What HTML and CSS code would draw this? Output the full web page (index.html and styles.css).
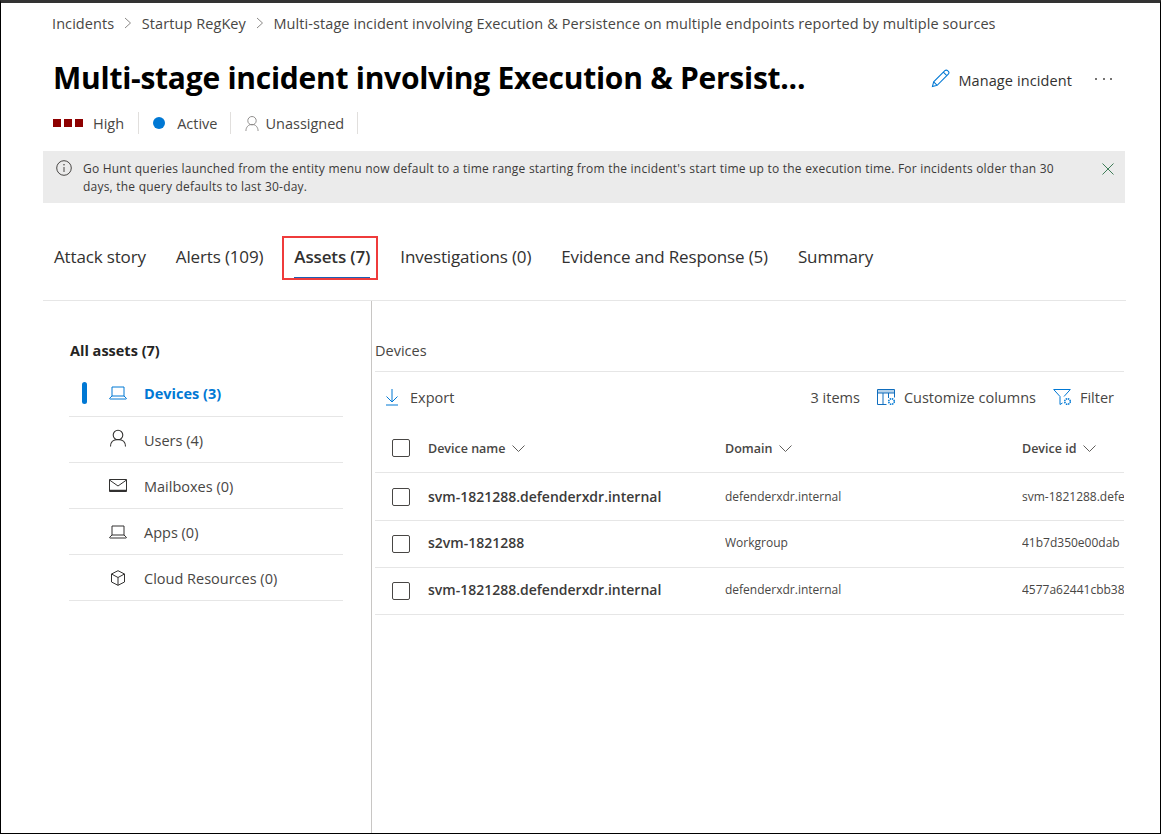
FILE: index.html
```html
<!DOCTYPE html>
<html>
<head>
  <meta charset="utf-8">
  <title>Incident assets</title>
  <link rel="stylesheet" href="styles.css">
</head>
<body>
<div class="frame">

  <!-- breadcrumb -->
  <div class="crumbs">
    <span>Incidents</span>
    <svg class="crumb-sep" width="8" height="12" viewBox="0 0 8 12"><path d="M1 1l5.500 5L1 11" fill="none" stroke="#8a8886"/></svg>
    <span>Startup RegKey</span>
    <svg class="crumb-sep" width="8" height="12" viewBox="0 0 8 12"><path d="M1 1l5.500 5L1 11" fill="none" stroke="#8a8886"/></svg>
    <span>Multi-stage incident involving Execution &amp; Persistence on multiple endpoints reported by multiple sources</span>
  </div>

  <!-- title row -->
  <div class="title-row">
    <h1>Multi-stage incident involving Execution &amp; Persist...</h1>
    <div class="title-actions">
      <svg width="19" height="19" viewBox="0 0 20 20"><path d="M1.500 18.500l1.300-5L14.600 1.800c.8-.8 2.100-.8 2.900 0l.7.700c.8.800.8 2.100 0 2.900L6.500 17.200zM2.800 13.500l3.700 3.700M13 3.400l3.600 3.600" fill="none" stroke="#0078d4" stroke-width="1.100"/></svg>
      <span class="manage">Manage incident</span>
      <span class="dots"><i></i><i></i><i></i></span>
    </div>
  </div>

  <!-- status row -->
  <div class="status-row">
    <div class="status-item status-sev">
      <span class="sev"><i></i><i></i><i></i></span>
      <span>High</span>
    </div>
    <div class="status-item">
      <span class="active-dot"></span>
      <span>Active</span>
    </div>
    <div class="status-item status-user">
      <svg width="14" height="17" viewBox="0 0 15 17"><circle cx="7.500" cy="5.500" r="4.500" fill="none" stroke="#8a8886"/><path d="M1 16.500c0-4 2.500-7 6.500-7s6.500 3 6.500 7" fill="none" stroke="#8a8886"/></svg>
      <span>Unassigned</span>
    </div>
  </div>

  <!-- notice -->
  <div class="notice">
    <svg class="notice-icon" width="16" height="16" viewBox="0 0 16 16"><circle cx="8" cy="8" r="7.300" fill="none" stroke="#484644"/><path d="M8 7v5" stroke="#484644"/><circle cx="8" cy="4.800" r=".8" fill="#484644"/></svg>
    <p>Go Hunt queries launched from the entity menu now default to a time range starting from the incident's start time up to the execution time. For incidents older than 30 days, the query defaults to last 30-day.</p>
    <svg class="notice-close" width="12" height="12" viewBox="0 0 12 12"><path d="M.5.500l11 11M11.500.500l-11 11" stroke="#3f7d58"/></svg>
  </div>

  <!-- tabs -->
  <div class="tabs">
    <span class="tab">Attack story</span>
    <span class="tab">Alerts (109)</span>
    <span class="tab tab-on">Assets (7)</span>
    <span class="tab">Investigations (0)</span>
    <span class="tab">Evidence and Response (5)</span>
    <span class="tab">Summary</span>
  </div>

  <div class="content">

    <!-- left nav -->
    <div class="side">
      <div class="side-title">All assets (7)</div>
      <div class="side-item side-on">
        <svg width="18" height="14" viewBox="0 0 18 14"><path d="M3 1h12v9H3zM3 10L.6 12.300c-.2.300 0 .7.400.7h16c.4 0 .6-.4.400-.7L15 10" fill="none" stroke="#0078d4"/></svg>
        <span>Devices (3)</span>
      </div>
      <div class="side-item">
        <svg class="icon-user" width="18" height="18" viewBox="0 0 18 18"><circle cx="9" cy="6" r="4.800" fill="none" stroke="#323130" stroke-width="1.100"/><path d="M1.500 17.500c0-4.500 3-7 7.500-7s7.500 2.500 7.500 7" fill="none" stroke="#323130" stroke-width="1.100"/></svg>
        <span>Users (4)</span>
      </div>
      <div class="side-item">
        <svg width="18" height="13" viewBox="0 0 18 13"><path d="M.5.500h17v12H.5z" fill="none" stroke="#323130"/><path d="M.5 1L9 7l8.500-6" fill="none" stroke="#323130"/><path d="M.5 11.500h17" stroke="#323130" stroke-width="1.500"/></svg>
        <span>Mailboxes (0)</span>
      </div>
      <div class="side-item">
        <svg width="18" height="14" viewBox="0 0 18 14"><path d="M3 1h12v9H3zM3 10L.6 12.300c-.2.300 0 .7.400.7h16c.4 0 .6-.4.400-.7L15 10" fill="none" stroke="#323130"/></svg>
        <span>Apps (0)</span>
      </div>
      <div class="side-item">
        <svg width="18" height="16" viewBox="0 0 18 16"><path d="M9 .700l6.500 3.300v8L9 15.300 2.500 12V4zM2.500 4L9 7.500 15.500 4M9 7.500v7.800" fill="none" stroke="#323130"/></svg>
        <span>Cloud Resources (0)</span>
      </div>
    </div>

    <!-- devices table -->
    <div class="main">
      <div class="main-title">Devices</div>
      <div class="toolbar">
        <div class="tool tool-export">
          <svg width="14" height="18" viewBox="0 0 14 18"><path d="M7 1v12.500M1.500 8.500L7 14l5.500-5.500M1 17h12" fill="none" stroke="#0078d4"/></svg>
          <span>Export</span>
        </div>
        <div class="tool-right">
          <span>3 items</span>
          <div class="tool">
            <svg width="19" height="17" viewBox="0 0 19 17"><path d="M.5 15.500V.5h17v8M.5 15.500h9M.5 4h17M6 4v11.500M11.500 4v5" fill="none" stroke="#106ebe"/><path d="M.5.500h17V4H.5z" fill="#106ebe" opacity=".3"/><circle cx="14.500" cy="12.500" r="2.800" fill="none" stroke="#0078d4" stroke-width="1.500" stroke-dasharray="1.500 .7"/></svg>
            <span>Customize columns</span>
          </div>
          <div class="tool">
            <svg width="19" height="17" viewBox="0 0 19 17"><path d="M.700.500h16.600L11 7.500M.700.500L7 7.500v8l2.500-1.500" fill="none" stroke="#0078d4"/><circle cx="14.500" cy="12.500" r="2.800" fill="none" stroke="#0078d4" stroke-width="1.500" stroke-dasharray="1.500 .7"/></svg>
            <span>Filter</span>
          </div>
        </div>
      </div>
      <div class="grid-wrap">
        <table class="grid">
          <colgroup><col class="c-check"><col class="c-name"><col class="c-domain"><col class="c-id"></colgroup>
          <tr class="head">
            <th><span class="check"></span></th>
            <th>Device name <svg class="sort" width="13" height="7" viewBox="0 0 13 7"><path d="M.5.500l6 6 6-6" fill="none" stroke="#605e5c"/></svg></th>
            <th>Domain <svg class="sort" width="13" height="7" viewBox="0 0 13 7"><path d="M.5.500l6 6 6-6" fill="none" stroke="#605e5c"/></svg></th>
            <th>Device id <svg class="sort" width="13" height="7" viewBox="0 0 13 7"><path d="M.5.500l6 6 6-6" fill="none" stroke="#605e5c"/></svg></th>
          </tr>
          <tr class="row-a">
            <td><span class="check"></span></td>
            <td class="dev">svm-1821288.defenderxdr.internal</td>
            <td>defenderxdr.internal</td>
            <td>svm-1821288.defe</td>
          </tr>
          <tr>
            <td><span class="check"></span></td>
            <td class="dev">s2vm-1821288</td>
            <td>Workgroup</td>
            <td>41b7d350e00dab</td>
          </tr>
          <tr>
            <td><span class="check"></span></td>
            <td class="dev">svm-1821288.defenderxdr.internal</td>
            <td>defenderxdr.internal</td>
            <td>4577a62441cbb38</td>
          </tr>
        </table>
      </div>
    </div>
  </div>

  <!-- red box drawn on top of the Assets tab -->
  <div class="callout"></div>
</div>
</body>
</html>
```

FILE: styles.css
```css
html, body {margin: 0; padding: 0;}
body {background: #fff; font-family: "Open Sans", "Noto Sans", sans-serif; color: #323130;}
.frame {position: relative; width: 1161px; height: 834px; box-sizing: border-box; border: 1px solid #000; border-top: 3px solid #333; padding-left: 42px; overflow: hidden; display: flex; flex-direction: column;}

.crumbs {display: flex; align-items: center; height: 24px; margin-top: 8px; padding-left: 9px; font-size: 14.5px; letter-spacing: .08px; color: #484644; white-space: nowrap;}
.crumb-sep {margin: 0 9.5px 0 10px;}

.title-row {display: flex; align-items: center; justify-content: space-between; height: 44px; margin-top: 20px; padding-left: 10px; padding-right: 48px;}
h1 {margin: 0; font-size: 30px; font-weight: 700; letter-spacing: -.26px; color: #000; white-space: nowrap;}
.title-actions {display: flex; align-items: center; padding-top: 2px; font-size: 14.5px; letter-spacing: .1px; color: #323130;}
.manage {margin-left: 8px; padding-top: 5px;}
.dots {display: flex; gap: 5.5px; margin-left: 23px; margin-top: 2px;}
.dots i {width: 2px; height: 2px; border-radius: 50%; background: #484644;}

.status-row {display: flex; align-items: center; height: 22px; margin-top: 13px; padding-left: 10px; font-size: 14.5px; color: #484644;}
.status-item {display: flex; align-items: center; height: 22px; padding-right: 13px; margin-right: 14px; border-right: 1px solid #e1dfdd;}
.status-sev {padding-right: 14px;}
.status-user {gap: 6px;}
.sev {display: flex; gap: 3px; margin-right: 10px;}
.sev i {width: 8px; height: 8px; background: #8e0000;}
.active-dot {width: 12px; height: 12px; border-radius: 50%; background: #0078d4; margin-right: 12px;}

.notice {display: flex; align-items: flex-start; width: 1082px; height: 52px; box-sizing: border-box; margin-top: 17px; padding: 9px 11px 0 13px; background: #ebebeb; font-size: 12px; line-height: 18px; letter-spacing: .22px; color: #3b3a39;}
.notice p {margin: 0 0 0 11px; width: 985px;}
.notice-icon {flex: none;}
.notice-close {flex: none; margin-left: auto; margin-top: 3px;}

.tabs {display: flex; align-items: flex-start; width: 1083px; height: 98px; box-sizing: border-box; padding-top: 42px; border-bottom: 1px solid #e6e6e6; gap: 30px; padding-left: 11px; font-size: 17px; letter-spacing: -.15px; color: #323130;}
.tab {line-height: 24px;}
.tab-on {position: relative; margin-left: 1px; font-weight: 600;}
.tab-on::after {content: ""; position: absolute; left: 0; right: 0; top: 32px; height: 2px; background: #1d5fb4;}

.content {display: flex; flex: 1; min-height: 0;}
.side {width: 329px; box-sizing: border-box; padding: 40px 28px 0 26px; border-right: 1px solid #c8c6c4; flex: none;}
.side-title {font-size: 14.5px; font-weight: 700; color: #252423; height: 20px; line-height: 20px; margin-bottom: 10px; padding-left: 1px;}
.side-item {display: flex; align-items: center; height: 46px; box-sizing: border-box; padding-top: 2px; border-bottom: 1px solid #e6e6e6; font-size: 14.5px; color: #484644; padding-left: 40px; position: relative;}
.side-item svg {flex: none; width: 18px; margin-right: 17px; margin-bottom: 2px;}
.side-item .icon-user {margin-bottom: 6px;}
.side-on {padding-top: 0; color: #0078d4; font-weight: 700;}
.side-on::before {content: ""; position: absolute; left: 13px; top: 11px; width: 5px; height: 22px; border-radius: 3px; background: #0078d4;}

.main {width: 752px; padding-left: 3px; box-sizing: border-box; overflow: hidden;}
.main-title {height: 71px; box-sizing: border-box; padding-top: 40px; border-bottom: 1px solid #e6e6e6; font-size: 14.5px; line-height: 20px; color: #484644;}
.toolbar {display: flex; align-items: center; justify-content: space-between; height: 50px; margin-bottom: 2px; padding: 0 10px; font-size: 14.5px; color: #484644;}
.tool {display: flex; align-items: center;}
.tool svg {margin-right: 8px;}
.tool-export svg {margin-right: 11px;}
.tool-right {display: flex; align-items: center; gap: 17px;}

.grid-wrap {overflow: hidden;}
.grid {table-layout: fixed; width: 900px; border-collapse: collapse; font-size: 12px; color: #484644;}
.c-check {width: 53px;}
.c-name, .c-domain {width: 297px;}
.c-id {width: 253px;}
.grid th {height: 48px; text-align: left; font-size: 12.5px; font-weight: 600; color: #484644; border-bottom: 1px solid #e6e6e6; padding: 0;}
.grid td {height: 43px; padding: 0 0 3px; border-bottom: 1px solid #e6e6e6; white-space: nowrap; overflow: hidden;}
.grid td:first-child {height: 46px; padding: 0;}
.grid .row-a td {height: 46px; padding: 0 0 1px;}
.grid .row-a td:first-child {height: 47px; padding: 0;}
.grid td.dev {font-size: 14px; font-weight: 600; color: #3b3a39;}
.check {display: block; width: 16px; height: 16px; margin-left: 17px; border: 1px solid #484644; border-radius: 2px;}
.sort {margin-left: 3px; vertical-align: 1px;}

.callout {position: absolute; left: 281px; top: 233px; width: 92px; height: 40px; border: 2px solid #ef3b3b;}
```
